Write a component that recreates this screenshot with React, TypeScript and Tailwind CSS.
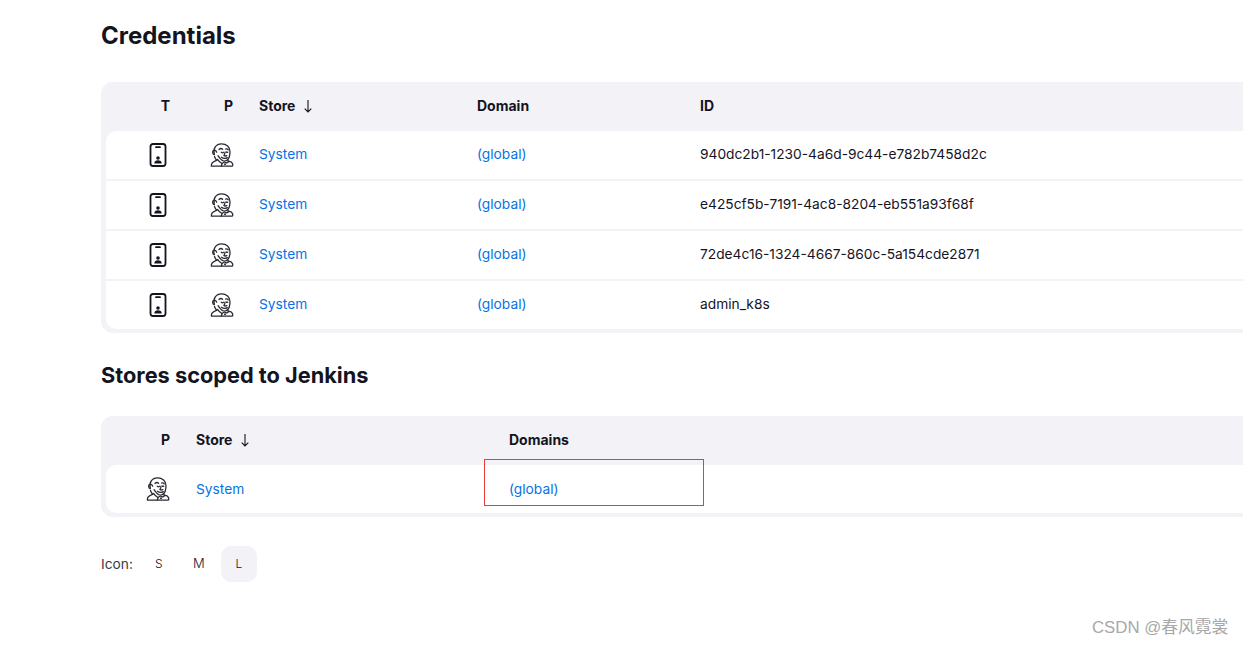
const rows = [
  "940dc2b1-1230-4a6d-9c44-e782b7458d2c",
  "e425cf5b-7191-4ac8-8204-eb551a93f68f",
  "72de4c16-1324-4667-860c-5a154cde2871",
  "admin_k8s",
]

function PhoneIcon() {
  return (
    <svg width="24" height="24" viewBox="0 0 24 24" fill="none" stroke="#14141f" strokeWidth="1.800">
      <rect x="4.500" y="1" width="15" height="22" rx="2.500" />
      <path d="M10 4.200h4" strokeLinecap="round" />
      <circle cx="12" cy="15" r="1.800" fill="#14141f" stroke="none" />
      <path d="M8.300 20.500c0-2.200 1.500-3.200 3.700-3.200s3.700 1 3.700 3.200z" fill="#14141f" stroke="none" />
    </svg>
  )
}

function JenkinsIcon() {
  return (
    <svg width="24" height="24" viewBox="0 0 24 24" fill="none" stroke="#2a2a33" strokeWidth="1.300" strokeLinejoin="round" strokeLinecap="round">
      <path d="M4.200 11.500C2.800 5.500 6 .8 11.500.8c5 0 8.500 3.200 8.500 8 0 3-.6 6.200-2.400 8-1.700 1.500-4.500 1.300-6.200-.1-1.600-1.300-2.600-2.800-3.400-4" />
      <path d="M4.200 11.500c-1.600-.3-2.300-3.500-.5-4.200 1.400-.4 2.600.6 3 1.900" />
      <path d="M4.500 13.500c.5 1.500 1.200 2.700 2.200 3.700" />
      <path d="M9 6.500c1-1 2.700-1 3.600-.2M15.500 6c1-.3 2.200 0 2.800.8" />
      <path d="M11.300 9.300c.8.700 1.600.7 2.200 0M16.200 9c.4.400 1 .4 1.500.1" />
      <path d="M15 9.200c-.1 1.400-.6 2.600-1.100 3.300.8.600 1.900.6 2.900.1" />
      <path d="M11.500 14.300c1.700 1.300 4 1.400 5.800.3" />
      <path d="M1.400 23.200c-.4-2.700 1.800-4.500 4.500-5.500l1.600-1.300c1.200 1.800 2.700 3.300 4.500 4.100l-.6 2.700z" />
      <path d="M12 20.500l2.300-1.500 2.400 1 2.100-1.800c1.600.2 3.300 1.100 3.800 2.600.3.900.1 2.400-.5 2.400H11.400" />
      <path d="M17.500 16.500l1.300 2.500" />
      <circle cx="15" cy="21.300" r="1" fill="#2a2a33" stroke="none" />
    </svg>
  )
}

function HeadCell({ className, children }: { className: string; children: React.ReactNode }) {
  return <div className={`flex items-center pb-[2px] text-[14px] font-bold text-[#14141f] ${className}`}>{children}</div>
}

function SortArrow() {
  return (
    <svg className="ml-2" width="10" height="14" viewBox="0 0 10 14" fill="none" stroke="#14141f" strokeWidth="1.100">
      <path d="M5 1v12M1.700 9.700 5 13l3.300-3.300" />
    </svg>
  )
}

export default function App() {
  return (
    <div className="relative h-[645px] w-[1243px] overflow-hidden bg-white pl-[101px] text-[13.75px] text-[#14141f] font-['Inter','Noto_Sans',sans-serif]">
      <h1 className="h-[82px] pt-[18px] text-[24px] font-bold leading-[36px]">Credentials</h1>

      <div className="w-[1200px] rounded-l-[12px] bg-[#f2f2f7] pb-1 pl-[5px]">
        <div className="flex h-[49px]">
          <HeadCell className="w-[76px] justify-end pr-3">T</HeadCell>
          <HeadCell className="w-[65px] justify-end pr-[14px]">P</HeadCell>
          <HeadCell className="w-[218px] pl-3">Store<SortArrow /></HeadCell>
          <HeadCell className="w-[223px] pl-3">Domain</HeadCell>
          <HeadCell className="pl-3">ID</HeadCell>
        </div>
        <div className="flex flex-col gap-[2px]">
          {rows.map((id, i) => (
            <div key={id} className={`flex h-12 items-center bg-white ${i === 0 ? "rounded-tl-[10px]" : ""} ${i === rows.length - 1 ? "rounded-bl-[10px]" : ""}`}>
              <div className="flex w-[76px] justify-end pr-3"><PhoneIcon /></div>
              <div className="flex w-[65px] justify-end pr-[13px]"><JenkinsIcon /></div>
              <div className="w-[218px] pb-[2px] pl-3 text-[#0673e5]">System</div>
              <div className="w-[223px] pb-[2px] pl-3 text-[#0673e5]">(global)</div>
              <div className="pb-[2px] pl-3">{id}</div>
            </div>
          ))}
        </div>
      </div>

      <h2 className="h-[83px] pt-[24px] text-[21.75px] font-bold leading-[36px]">Stores scoped to Jenkins</h2>

      <div className="w-[1200px] rounded-l-[12px] bg-[#f2f2f7] pb-1 pl-[5px]">
        <div className="flex h-[49px]">
          <HeadCell className="w-[76px] justify-end pr-3">P</HeadCell>
          <HeadCell className="w-[315px] pl-[14px]">Store<SortArrow /></HeadCell>
          <HeadCell className="pl-3">Domains</HeadCell>
        </div>
        <div className="flex h-12 items-center rounded-l-[10px] bg-white">
          <div className="flex w-[76px] justify-end pr-3"><JenkinsIcon /></div>
          <div className="w-[315px] pl-[14px] text-[#0673e5]">System</div>
          <div className="pl-3 text-[#0673e5]">(global)</div>
        </div>
      </div>

      <div className="mt-[29px] flex items-center">
        <span className="mr-2 text-[#3b3b45]">Icon:</span>
        <span className="flex h-9 w-9 items-center justify-center text-xs font-light">S</span>
        <span className="flex h-9 w-[44px] items-center justify-center text-[13px] font-light">M</span>
        <span className="flex h-9 w-9 items-center justify-center rounded-[10px] bg-[#f2f2f7] text-xs font-light">L</span>
      </div>

      {/* red annotation box from the screenshot */}
      <div className="absolute left-[484px] top-[459px] h-[47px] w-[220px] border border-[#f03a3a]" />

      <div className="absolute left-[1092px] top-[616px] text-[16.8px] leading-6 text-[#a8a8a8] font-['Liberation_Sans','Noto_Sans_CJK_SC',sans-serif]">CSDN @春风霓裳</div>
    </div>
  )
}
